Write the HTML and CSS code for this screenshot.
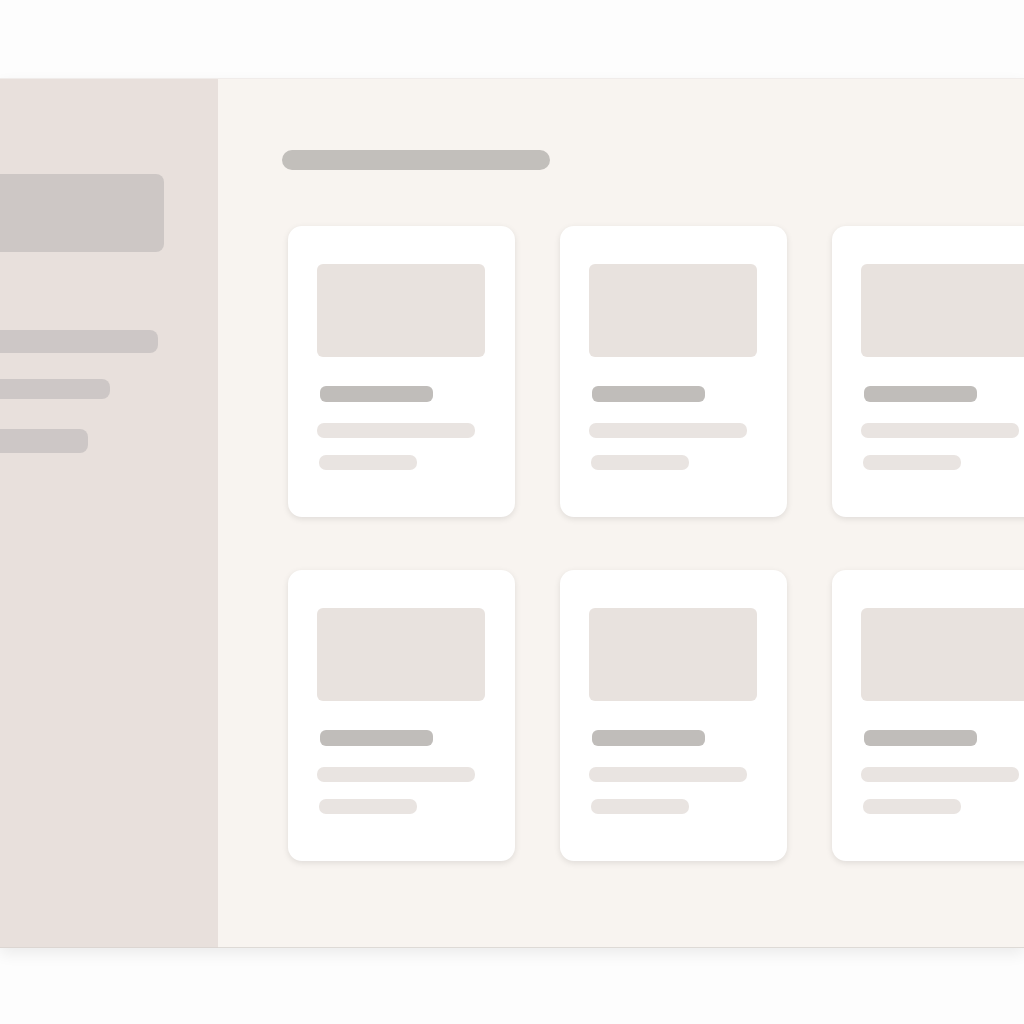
FILE: index.html
```html
<!DOCTYPE html>
<html>
<head>
<meta charset="utf-8">
<link rel="stylesheet" href="styles.css">
</head>
<body>
<div class="page">
  <div class="frame">
    <aside class="sidebar">
      <div class="sb-block"></div>
      <div class="sb-line sb-l1"></div>
      <div class="sb-line sb-l2"></div>
      <div class="sb-line sb-l3"></div>
    </aside>
    <main class="main">
      <div class="title"></div>
      <div class="grid">
        <div class="card"><div class="img"></div><div class="ct"></div><div class="ln ln1"></div><div class="ln ln2"></div></div>
        <div class="card"><div class="img"></div><div class="ct"></div><div class="ln ln1"></div><div class="ln ln2"></div></div>
        <div class="card"><div class="img"></div><div class="ct"></div><div class="ln ln1"></div><div class="ln ln2"></div></div>
        <div class="card"><div class="img"></div><div class="ct"></div><div class="ln ln1"></div><div class="ln ln2"></div></div>
        <div class="card"><div class="img"></div><div class="ct"></div><div class="ln ln1"></div><div class="ln ln2"></div></div>
        <div class="card"><div class="img"></div><div class="ct"></div><div class="ln ln1"></div><div class="ln ln2"></div></div>
      </div>
    </main>
  </div>
</div>
</body>
</html>
```

FILE: styles.css
```css
html, body {
  margin: 0;
  padding: 0;
  background: #fdfdfd;
  font-family: "Liberation Sans", sans-serif;
}
.page {
  padding-top: 78px;
  padding-bottom: 76px;
}
.frame {
  display: flex;
  width: 100%;
  height: 870px;
  border-top: 1px solid #f0ecea;
  box-sizing: border-box;
  box-shadow: 0 6px 14px rgba(0, 0, 0, 0.07);
}
.sidebar {
  width: 218px;
  flex: none;
  background: #e8e0dc;
  padding-top: 95px;
  box-sizing: border-box;
  border-bottom: 1px solid #dcd6d2;
}
.sb-block {
  width: 164px;
  height: 78px;
  background: #cdc7c5;
  border-radius: 0 8px 8px 0;
}
.sb-line {
  background: #cdc7c6;
  border-radius: 0 8px 8px 0;
}
.sb-l1 { width: 158px; height: 23px; margin-top: 78px; }
.sb-l2 { width: 110px; height: 20px; margin-top: 26px; }
.sb-l3 { width: 88px; height: 24px; margin-top: 30px; }
.main {
  flex: 1;
  min-width: 0;
  overflow: hidden;
  background: #f8f4f0;
  padding: 71px 0 0 64px;
  box-sizing: border-box;
  border-bottom: 1px solid #dedad6;
}
.title {
  width: 268px;
  height: 20px;
  background: #c2bfbb;
  border-radius: 10px;
}
.grid {
  margin-top: 56px;
  margin-left: 6px;
  display: grid;
  grid-template-columns: repeat(3, 227px);
  column-gap: 45px;
  row-gap: 53px;
  padding-bottom: 8px;
}
.card {
  height: 291px;
  background: #ffffff;
  border-radius: 14px;
  box-shadow: 0 2px 6px rgba(0, 0, 0, 0.1);
  padding: 38px 29px 0 29px;
  box-sizing: border-box;
}
.img {
  width: 168px;
  height: 93px;
  background: #e8e2de;
  border-radius: 6px;
}
.ct {
  width: 113px;
  height: 16px;
  margin: 29px 0 0 3px;
  background: #c0bdba;
  border-radius: 6px;
}
.ln {
  height: 15px;
  background: #e9e4e1;
  border-radius: 7px;
}
.ln1 { width: 158px; margin-top: 21px; }
.ln2 { width: 98px; margin: 17px 0 0 2px; }
```
